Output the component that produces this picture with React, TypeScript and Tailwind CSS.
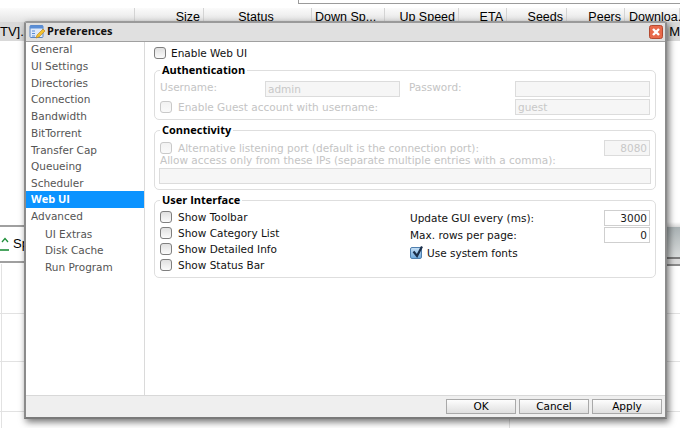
const dj = 'font-["DejaVu_Sans",sans-serif]';
const boldFont = "font-['Open_Sans',sans-serif] font-bold";

function Check({ disabled = false, checked = false }: { disabled?: boolean; checked?: boolean }) {
  if (checked) {
    return (
      <span className="relative block h-[12px] w-[12px] shrink-0 rounded-[2px] border border-[#4f7fae] bg-gradient-to-b from-[#c3def5] to-[#6fa9dc]">
        <svg viewBox="0 0 14 14" className="absolute left-[0px] top-[-3px] h-[14px] w-[14px]">
          <path d="M2.5 6.5 L6 11 L11 1.5" fill="none" stroke="#1b2f4a" strokeWidth="2.2" />
        </svg>
      </span>
    );
  }
  return (
    <span
      className={
        disabled
          ? "block h-[12px] w-[12px] shrink-0 rounded-[3px] border border-[#c9c9c9] bg-gradient-to-b from-[#f2f2f2] to-[#fafafa]"
          : "block h-[12px] w-[12px] shrink-0 rounded-[3px] border border-[#7f7f7f] bg-gradient-to-b from-[#e0e0e0] to-[#fbfbfb]"
      }
    />
  );
}

function Field({ w, value = "", disabled = true, right = false }: { w: string; value?: string; disabled?: boolean; right?: boolean }) {
  return (
    <div
      className={`${w} h-[16px] shrink-0 border px-[2px] text-[10.5px] leading-[15px] ${right ? "text-right" : ""} ${
        disabled ? "border-[#dcdcdc] bg-[#f6f6f6] text-[#c8c8c8]" : "border-[#cfcfcf] bg-white text-[#1a1a1a]"
      }`}
    >
      {value}
    </div>
  );
}

function Group({ title, className, children }: { title: string; className: string; children: React.ReactNode }) {
  return (
    <div className={`relative rounded-[5px] border border-[#dedede] ${className}`}>
      <div className={`absolute left-[5px] top-[-8px] bg-white px-[2px] text-[11px] leading-[14px] text-black ${boldFont}`}>{title}</div>
      {children}
    </div>
  );
}

const headers = [
  { label: "", w: "w-[135px]", align: "text-right" },
  { label: "Size", w: "w-[69px]", align: "text-right" },
  { label: "Status", w: "w-[108px]", align: "text-center" },
  { label: "Down Sp...", w: "w-[73px]", align: "text-left pl-[3px]" },
  { label: "Up Speed", w: "w-[74px]", align: "text-right" },
  { label: "ETA", w: "w-[48px]", align: "text-right" },
  { label: "Seeds", w: "w-[60px]", align: "text-right" },
  { label: "Peers", w: "w-[58px]", align: "text-right" },
  { label: "Downloa...", w: "w-[55px]", align: "text-left pl-[4px]" },
];

const sidebar = ["General", "UI Settings", "Directories", "Connection", "Bandwidth", "BitTorrent", "Transfer Cap", "Queueing", "Scheduler"];

function Background() {
  return (
    <div className="absolute inset-0 flex flex-col bg-white font-['Liberation_Sans',sans-serif] text-[13px] text-black">
      <div className="flex h-[8px] justify-end">
        <div className="h-[4px] w-[382px] border-b border-l border-[#9b9b9b]" />
      </div>
      <div className="flex h-[14px] bg-gradient-to-b from-[#fbfbfb] to-[#e4e4e4]">
        {headers.map((h) => (
          <div key={h.label} className={`${h.w} ${h.align} min-w-0 shrink-0 border-r border-[#d4d4d4] pr-[3px] text-[12.5px] leading-[19px]`}>
            <span className="whitespace-nowrap">{h.label}</span>
          </div>
        ))}
      </div>
      <div className="relative flex h-[19px] items-center justify-between bg-[#d9d9d9] leading-[19px]">
        <span>TV].a</span>
        <span className="whitespace-nowrap">4 M</span>
      </div>
      <div className="h-[183px]" />
      <div className="flex h-[40px] items-center justify-between">
        <div className="flex h-[38px] w-[26px] items-center border-y-2 border-[#a0a0a0] bg-white">
          <svg viewBox="0 0 10 14" className="h-[14px] w-[10px] shrink-0">
            <path d="M2 5 L5 1.5 L8 5" fill="none" stroke="#1f8f3a" strokeWidth="1.3" />
            <path d="M0 13 H9" stroke="#1f8f3a" strokeWidth="1.6" />
          </svg>
          <span className="ml-[3px]">Sp</span>
        </div>
        <div className="flex h-[44px] w-[13px] flex-col">
          <div className="h-[5px] bg-gradient-to-b from-[#ffffff] to-[#d8d8d8]" />
          <div className="flex-1 bg-gradient-to-b from-[#a9b1b3] to-[#d9dcdc]" />
          <div className="h-[2px] bg-[#7c7c7c]" />
          <div className="h-[5px] bg-[#dcdcdc]" />
          <div className="h-[2px] bg-[#8c8c8c]" />
        </div>
      </div>
      <div className="relative flex-1">
        <div className="absolute inset-0 grid grid-cols-[2px_508px_1fr]">
          <div className="border-r border-[#e2e2e2]" />
          <div className="border-r border-[#e2e2e2]" />
          <div />
        </div>
        <div className="absolute inset-x-0 top-[49px] h-px bg-[#e2e2e2]" />
        <div className="absolute inset-x-0 top-[97px] h-px bg-[#e2e2e2]" />
        <div className="absolute inset-x-0 top-[147px] h-px bg-[#e2e2e2]" />
      </div>
    </div>
  );
}

function Button({ label }: { label: string }) {
  return (
    <div className="flex h-[15px] w-[70px] items-center justify-center border border-[#a9a9a9] bg-gradient-to-b from-[#fdfdfd] to-[#dfdfdf] text-[10.5px] leading-none text-black">
      {label}
    </div>
  );
}

export default function App() {
  return (
    <div className={`relative h-[428px] w-[680px] overflow-hidden bg-white ${dj}`}>
      <Background />
      <div className="absolute left-[24px] top-[21px] flex h-[398px] w-[643px] flex-col rounded-t-[3px] border-x-2 border-b-2 border-t-2 border-x-[#8b8b8b] border-b-[#7a7a7a] border-t-[#9a9a9a] bg-white shadow-[2px_3px_7px_rgba(0,0,0,0.55)]">
        <div className="flex h-[19px] shrink-0 items-center justify-between border-b border-[#a0a0a0] bg-[#e0e0e0] pl-[3px] pr-[2px]">
          <div className="flex items-center">
            <svg viewBox="0 0 16 16" className="h-[16px] w-[16px]">
              <rect x="1" y="1.5" width="13" height="12" rx="1" fill="#dfeafa" stroke="#5b86c4" />
              <rect x="1" y="1.5" width="13" height="3" fill="#5b8ed6" />
              <path d="M3 7h3M3 9.5h3M3 12h3" stroke="#5b8ed6" strokeWidth="1" />
              <path d="M7 14 L8 11 L14 5 L16 7 L10 13 Z" fill="#f2c230" stroke="#b9801a" strokeWidth="0.6" />
            </svg>
            <span className={`ml-[2px] mb-[3px] text-[11px] leading-none text-[#111] ${boldFont}`}>Preferences</span>
          </div>
          <svg viewBox="0 0 14 14" className="h-[14px] w-[14px]">
            <rect x="0.5" y="0.5" width="13" height="13" rx="2" fill="#e8694a" stroke="#b44a30" />
            <path d="M4 4 L10 10 M10 4 L4 10" stroke="white" strokeWidth="2.4" />
          </svg>
        </div>
        <div className="flex min-h-0 flex-1">
          <div className="flex w-[119px] shrink-0 flex-col border-r border-[#dadada] text-[10.5px] text-[#555]">
            {sidebar.map((s, i) => (
              <div key={s} className={`h-[16.75px] pl-[5px] leading-[18px] ${i === 0 ? "mt-[-2px]" : ""}`}>{s}</div>
            ))}
            <div className={`h-[17px] bg-[#0b93ff] pl-[5px] text-[11px] leading-[16px] text-white ${boldFont}`}>Web UI</div>
            <div className="h-[16.75px] pl-[5px] leading-[16px]">Advanced</div>
            {["UI Extras", "Disk Cache", "Run Program"].map((s) => (
              <div key={s} className="h-[16.75px] pl-[19px] leading-[18px]">{s}</div>
            ))}
          </div>
          <div className="flex min-w-0 flex-1 flex-col pl-[9px] pr-[9px] pt-[4px] text-[10.5px] leading-[14px]">
            <div className="flex h-[14px] items-center">
              <Check />
              <span className="ml-[5px] text-[#111]">Enable Web UI</span>
            </div>
            <Group title="Authentication" className="mt-[10px] h-[50px] shrink-0 pl-[5px] pr-[5px] pt-[9px] text-[#c4c4c4]">
              <div className="flex items-center">
                <span className="mb-[3px] w-[105px]">Username:</span>
                <Field w="w-[135px]" value="admin" />
                <span className="mb-[3px] ml-[9px] flex-1">Password:</span>
                <Field w="w-[135px]" />
              </div>
              <div className="mt-[2px] flex items-center">
                <Check disabled />
                <span className="mb-[1px] ml-[6px] flex-1">Enable Guest account with username:</span>
                <Field w="w-[135px]" value="guest" />
              </div>
            </Group>
            <Group title="Connectivity" className="mt-[10px] h-[60px] shrink-0 pl-[5px] pr-[5px] pt-[9px] text-[#c4c4c4]">
              <div className="flex items-center justify-between">
                <div className="flex items-center">
                  <Check disabled />
                  <span className="ml-[6px]">Alternative listening port (default is the connection port):</span>
                </div>
                <Field w="w-[46px]" value="8080" right />
              </div>
              <div className="mt-[-3px]">Allow access only from these IPs (separate multiple entries with a comma):</div>
              <Field w="w-[492px] ml-[-1px] mt-[1px]" />
            </Group>
            <Group title="User Interface" className="mt-[10px] h-[78px] shrink-0 pl-[5px] pr-[5px] pt-[9px] text-[#111]">
              <div className="flex">
                <div className="flex w-[250px] flex-col gap-[2px]">
                  {["Show Toolbar", "Show Category List", "Show Detailed Info", "Show Status Bar"].map((s) => (
                    <div key={s} className="flex h-[14px] items-center">
                      <Check />
                      <span className="ml-[6px]">{s}</span>
                    </div>
                  ))}
                </div>
                <div className="flex flex-1 flex-col">
                  <div className="flex h-[16px] items-center justify-between"><span>Update GUI every (ms):</span><Field w="w-[46px]" value="3000" disabled={false} right /></div>
                  <div className="mt-[1px] flex h-[16px] items-center justify-between"><span>Max. rows per page:</span><Field w="w-[46px]" value="0" disabled={false} right /></div>
                  <div className="mt-[1px] flex h-[18px] items-center"><Check checked /><span className="ml-[5px]">Use system fonts</span></div>
                </div>
              </div>
            </Group>
          </div>
        </div>
        <div className="flex h-[22px] shrink-0 items-center justify-end gap-[3px] border-t border-[#d8d8d8] bg-[#efefef] pr-[3px]">
          <Button label="OK" />
          <Button label="Cancel" />
          <Button label="Apply" />
        </div>
      </div>
    </div>
  );
}
